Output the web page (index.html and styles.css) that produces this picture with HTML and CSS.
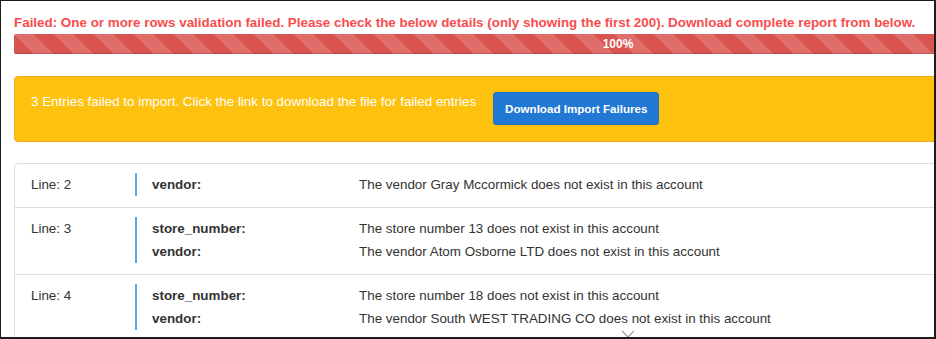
FILE: index.html
```html
<!DOCTYPE html>
<html lang="en">
<head>
    <meta charset="UTF-8">
    <meta name="viewport" content="width=device-width, initial-scale=1.0">
    <title>Import Results</title>
    <link rel="stylesheet" href="styles.css">
</head>
<body>
<div class="frame">
    <div class="page">
        <p class="status-msg">Failed: One or more rows validation failed. Please check the below details (only showing the first 200). Download complete report from below.</p>

        <div class="progress">
            <div class="progress-bar" style="width: 100%">100%</div>
        </div>

        <div class="alert-warn">
            <span class="alert-text">3 Entries failed to import. Click the link to download the file for failed entries</span>
            <button class="btn-download">Download Import Failures</button>
        </div>

        <div class="error-list">
            <div class="error-row">
                <div class="line-no">Line: 2</div>
                <div class="fields">
                    <span class="field-key">vendor:</span>
                    <span class="field-msg">The vendor Gray Mccormick does not exist in this account</span>
                </div>
            </div>
            <div class="error-row">
                <div class="line-no">Line: 3</div>
                <div class="fields">
                    <span class="field-key">store_number:</span>
                    <span class="field-msg">The store number 13 does not exist in this account</span>
                    <span class="field-key">vendor:</span>
                    <span class="field-msg">The vendor Atom Osborne LTD does not exist in this account</span>
                </div>
            </div>
            <div class="error-row">
                <div class="line-no">Line: 4</div>
                <div class="fields">
                    <span class="field-key">store_number:</span>
                    <span class="field-msg">The store number 18 does not exist in this account</span>
                    <span class="field-key">vendor:</span>
                    <span class="field-msg">The vendor South WEST TRADING CO does not exist in this account</span>
                </div>
            </div>
        </div>
    </div>

    <!-- scroll hint, mostly cut off at the bottom -->
    <svg class="scroll-hint" width="14" height="14" viewBox="0 0 14 14">
        <path d="M1 1 L13 13 M13 1 L1 13" stroke="#9a9a9a" stroke-width="1.2" fill="none"/>
    </svg>
</div>
</body>
</html>
```

FILE: styles.css
```css
body {
    margin: 0;
    padding: 0;
    font-family: "Liberation Sans", Arial, sans-serif;
    color: #333;
    background: #fff;
}

.frame {
    position: relative;
    width: 936px;
    height: 339px;
    box-sizing: border-box;
    border: 1px solid #1c1c1c;
    border-right-width: 2px;
    border-bottom-width: 2px;
    overflow: hidden;
}

.page {
    width: 1208px;
    padding: 13px 0 0 13px;
}

.status-msg {
    margin: 0 0 2px 0;
    font-size: 13.4px;
    line-height: 18px;
    font-weight: bold;
    color: #f74d4d;
    white-space: nowrap;
}

.progress {
    height: 20px;
    margin-bottom: 22px;
    background: #f5f5f5;
    border-radius: 2px;
    box-shadow: inset 0 1px 2px rgba(0, 0, 0, 0.1);
    overflow: hidden;
}

.progress-bar {
    height: 100%;
    background-color: #d9534f;
    background-image: linear-gradient(45deg,
        rgba(255, 255, 255, 0.15) 25%, transparent 25%,
        transparent 50%, rgba(255, 255, 255, 0.15) 50%,
        rgba(255, 255, 255, 0.15) 75%, transparent 75%, transparent);
    background-size: 40px 40px;
    box-shadow: inset 0 -1px 0 rgba(0, 0, 0, 0.15);
    color: #fff;
    font-size: 12px;
    font-weight: bold;
    line-height: 21px;
    text-align: center;
}

.alert-warn {
    display: flex;
    align-items: flex-start;
    gap: 17px;
    padding: 15px 16px 16px 16px;
    margin-bottom: 21px;
    background: #fec10d;
    border: 1px solid #f5ab1c;
    border-radius: 4px;
    color: #fff;
}

.alert-text {
    font-size: 13.4px;
    line-height: 20px;
}

.btn-download {
    height: 33px;
    padding: 0 11px;
    border: 1px solid #1d70c4;
    border-radius: 3px;
    background: #2279d3;
    color: #fff;
    font-family: "Liberation Sans", Arial, sans-serif;
    font-size: 11.6px;
    font-weight: bold;
    cursor: pointer;
}

.error-list {
    border: 1px solid #ddd;
    border-radius: 4px;
}

.error-row {
    display: flex;
    padding: 9px 16px 11px 16px;
    border-bottom: 1px solid #ddd;
    font-size: 13.4px;
    line-height: 23px;
}

.line-no {
    width: 104px;
    flex-shrink: 0;
}

.fields {
    display: grid;
    grid-template-columns: 207px auto;
    border-left: 2px solid #5aa8e4;
    padding-left: 15px;
}

.field-key {
    font-weight: bold;
}

.scroll-hint {
    position: absolute;
    left: 620px;
    top: 329px;
}
```
